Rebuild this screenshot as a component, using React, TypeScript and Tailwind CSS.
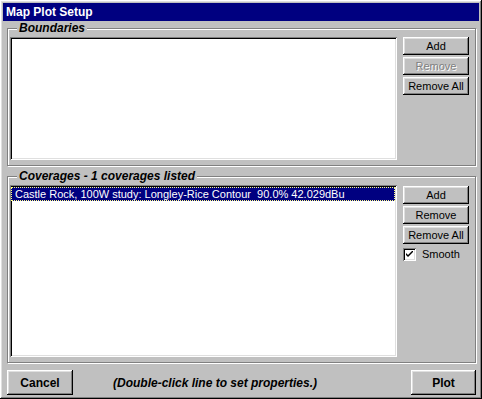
import React from 'react';

const font = { fontFamily: '"Liberation Sans", Arial, sans-serif' };

const raised =
  'shadow-[inset_-1px_-1px_0_#000,inset_1px_1px_0_#fff,inset_-2px_-2px_0_#808080,inset_2px_2px_0_#dfdfdf]';
const sunken =
  'shadow-[inset_1px_1px_0_#808080,inset_-1px_-1px_0_#fff,inset_2px_2px_0_#000,inset_-2px_-2px_0_#dfdfdf]';

const SideButton = ({ label, disabled }: { label: string; disabled?: boolean }) => (
  <div
    className={`h-[18px] w-[66px] bg-[#c0c0c0] ${raised} flex items-center justify-center text-[11px] leading-none ${
      disabled ? 'text-[#808080] [text-shadow:1px_1px_0_#fff]' : 'text-black'
    }`}
  >
    {label}
  </div>
);

const GroupBox = ({
  title,
  className,
  children,
}: {
  title: string;
  className: string;
  children: React.ReactNode;
}) => (
  <div
    className={`relative border border-[#808080] shadow-[inset_1px_1px_0_#fff,1px_1px_0_#fff] flex gap-[6px] pl-[2px] pt-[8px] pb-[5px] pr-[6px] ${className}`}
  >
    <div className="absolute left-[9px] top-[-8px] bg-[#c0c0c0] px-[2px] text-[12px] font-bold italic leading-[15px] text-black">
      {title}
    </div>
    {children}
  </div>
);

export default function App() {
  return (
    <div style={font} className={`w-[482px] h-[399px] bg-[#c0c0c0] p-[3px] flex flex-col ${raised}`}>
      <div className="h-[18px] bg-[#000080] text-white text-[12px] font-bold leading-[18px] pl-[3px]">
        Map Plot Setup
      </div>
      <div className="flex-1 flex flex-col pl-[4px] pr-[3px]">
        <GroupBox title="Boundaries" className="mt-[7px] h-[138px]">
          <div className={`flex-1 bg-white ${sunken}`} />
          <div className="flex flex-col gap-[2px]">
            <SideButton label="Add" />
            <SideButton label="Remove" disabled />
            <SideButton label="Remove All" />
          </div>
        </GroupBox>

        <GroupBox title="Coverages - 1 coverages listed" className="mt-[10px] h-[187px]">
          <div className={`flex-1 bg-white ${sunken} p-[2px] pl-[1px]`}>
            <div className="h-[14px] bg-[#000080] border border-dotted border-[#ffff80] text-white text-[11px] leading-[12px] pl-[3px] whitespace-pre">
              Castle Rock, 100W study: Longley-Rice Contour  90.0% 42.029dBu
            </div>
          </div>
          <div className="flex flex-col gap-[2px] pt-px">
            <SideButton label="Add" />
            <SideButton label="Remove" />
            <SideButton label="Remove All" />
            <div className="flex items-center gap-[6px] mt-[2px]">
              <div className={`w-[13px] h-[13px] bg-white ${sunken} flex items-center justify-center`}>
                <svg width="7" height="7" viewBox="0 0 7 7">
                  <path d="M0 2 L0 4 L2 6 L7 1 L7 -1 L2 4 Z" fill="#000" />
                </svg>
              </div>
              <span className="text-[11px] leading-none text-black">Smooth</span>
            </div>
          </div>
        </GroupBox>

        <div className="flex items-center mt-[7px]">
          <div className={`w-[66px] h-[25px] ${raised} flex items-center justify-center text-[12px] font-bold text-black`}>
            Cancel
          </div>
          <div className="ml-[40px] text-[12px] font-bold italic text-black flex-1">
            (Double-click line to set properties.)
          </div>
          <div className={`w-[65px] h-[25px] ${raised} flex items-center justify-center text-[12px] font-bold text-black`}>
            Plot
          </div>
        </div>
      </div>
    </div>
  );
}
